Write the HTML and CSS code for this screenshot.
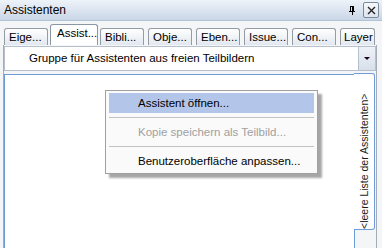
FILE: index.html
```html
<!DOCTYPE html>
<html lang="de">
<head>
    <meta charset="UTF-8">
    <title>Assistenten</title>
    <link rel="stylesheet" href="styles.css">
</head>
<body>
<div class="panel">
    <div class="titlebar">
        <span class="title">Assistenten</span>
        <span class="pin">
            <svg width="8" height="10" viewBox="0 0 8 10">
                <path d="M2 1h4M2.5 1v5M5.5 1v5M1 6h6M4 6v4" stroke="#000" stroke-width="1" fill="none" shape-rendering="crispEdges"/>
                <path d="M4.5 1.5v4" stroke="#000" stroke-width="1" shape-rendering="crispEdges"/>
            </svg>
        </span>
        <span class="close">
            <svg width="9" height="9" viewBox="0 0 9 9">
                <path d="M1 1l7 7M8 1l-7 7" stroke="#222" stroke-width="1.4" fill="none"/>
            </svg>
        </span>
    </div>

    <div class="tabs">
        <div class="tab">Eige...</div>
        <div class="tab active">Assist...</div>
        <div class="tab">Bibli...</div>
        <div class="tab">Obje...</div>
        <div class="tab">Eben...</div>
        <div class="tab">Issue...</div>
        <div class="tab">Con...</div>
        <div class="tab last">Layer</div>
    </div>

    <div class="page">
        <div class="combo">
            <span class="combo-text">Gruppe für Assistenten aus freien Teilbildern</span>
            <span class="combo-btn"><span class="arrow"></span></span>
        </div>
        <div class="listwrap">
            <div class="list"></div>
            <div class="sidetab"><span class="sidetab-label">&lt;leere Liste der Assistenten&gt;</span></div>
        </div>
    </div>

    <!-- Kontextmenü liegt über der Liste -->
    <div class="menu">
        <div class="menu-item selected">Assistent öffnen...</div>
        <div class="menu-sep"></div>
        <div class="menu-item disabled">Kopie speichern als Teilbild...</div>
        <div class="menu-sep"></div>
        <div class="menu-item">Benutzeroberfläche anpassen...</div>
    </div>
</div>
</body>
</html>
```

FILE: styles.css
```css
body {
    margin: 0;
    font-family: "Liberation Sans", Arial, sans-serif;
    font-size: 11px;
    color: #000;
    background-color: #f4f5f7;
}

.panel {
    position: relative;
    width: 382px;
    height: 248px;
    overflow: hidden;
    background-color: #f4f5f7;
}

.titlebar {
    display: flex;
    align-items: center;
    height: 21px;
    padding: 0 3px 0 4px;
    background: linear-gradient(#eef3f9, #c9d6e7);
    border-bottom: 1px solid #b4c2d6;
    box-sizing: border-box;
}

.title {
    flex: 1;
    font-size: 12px;
}

.pin {
    display: flex;
    width: 8px;
    height: 10px;
    margin-right: 7px;
}

.close {
    display: flex;
    align-items: center;
    justify-content: center;
    width: 14px;
    height: 14px;
    border: 1px solid #7d8a9c;
    border-radius: 2px;
    background: linear-gradient(#f6f8fb, #dde4ee);
}

.tabs {
    display: flex;
    align-items: flex-end;
    gap: 4px;
    height: 21px;
    margin-top: 3px;
    padding-left: 4px;
}

.tab {
    width: 44px;
    height: 17px;
    line-height: 16px;
    padding-left: 4px;
    box-sizing: border-box;
    border: 1px solid #939ba5;
    border-bottom: none;
    border-radius: 3px 3px 0 0;
    background: linear-gradient(#ffffff, #e2e8f0);
    font-size: 11.5px;
    white-space: nowrap;
    overflow: hidden;
}

.tab.active {
    position: relative;
    z-index: 1;
    width: 48px;
    height: 21px;
    line-height: 17px;
    margin: 0 -2px;
    padding-left: 6px;
    background: #fff;
    border-color: #8a96a5;
}

.tab.last {
    width: 35px;
    padding-left: 3px;
}

.page {
    border-left: 1px solid #a2abb6;
    border-right: 1px solid #a2abb6;
    margin: 0 5px 0 3px;
    padding-top: 1px;
}

.combo {
    display: flex;
    height: 25px;
    background: #fff;
    border: 1px solid #b6c0cc;
    box-sizing: border-box;
}

.combo-text {
    flex: 1;
    line-height: 23px;
    padding-left: 24px;
    font-size: 11.5px;
}

.combo-btn {
    display: flex;
    align-items: center;
    justify-content: center;
    width: 16px;
    background: linear-gradient(#eef2f7, #d7dfe9);
    border-left: 1px solid #b6c0cc;
}

.arrow {
    width: 0;
    height: 0;
    border-left: 3px solid transparent;
    border-right: 3px solid transparent;
    border-top: 3px solid #200020;
}

.listwrap {
    display: flex;
    align-items: flex-start;
    margin-top: 3px;
    padding-right: 1px;
}

.list {
    flex: 1;
    height: 190px;
    background: #fff;
    border: 1px solid #6f9bd8;
    border-bottom: none;
}

.sidetab {
    position: relative;
    display: flex;
    justify-content: center;
    width: 21px;
    height: 157px;
    margin-top: -1px;
    margin-left: -1px;
    padding-top: 7px;
    box-sizing: border-box;
    background: #fff;
    border: 1px solid #6f9bd8;
    border-left: none;
    border-radius: 0 3px 3px 0;
}

.sidetab-label {
    writing-mode: vertical-rl;
    transform: rotate(180deg);
    font-size: 10.5px;
    color: #1a1a1a;
    white-space: nowrap;
}

.menu {
    position: absolute;
    left: 105px;
    top: 90px;
    width: 213px;
    padding: 2px 3px;
    box-sizing: border-box;
    background: #fafafa;
    border: 1px solid #a0a0a0;
    box-shadow: 4px 4px 2px rgba(0, 0, 0, 0.35);
}

.menu-item {
    height: 20px;
    line-height: 20px;
    padding-left: 29px;
    font-size: 11.5px;
}

.menu-item.selected {
    background: #b3c6ea;
}

.menu-item.disabled {
    color: #a0a0a0;
}

.menu-sep {
    height: 1px;
    margin: 4px 0;
    background: #c2c2c2;
}
```
